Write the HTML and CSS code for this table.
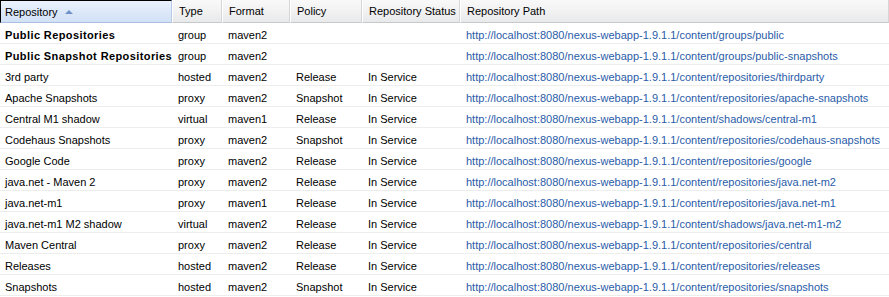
FILE: index.html
```html
<!DOCTYPE html>
<html>
<head>
<meta charset="utf-8">
<link rel="stylesheet" href="styles.css">
</head>
<body>
<table class="grid">
  <colgroup>
    <col class="c-repo"><col class="c-type"><col class="c-format"><col class="c-policy"><col class="c-status"><col class="c-path">
  </colgroup>
  <thead>
    <tr>
      <th class="sorted">Repository <span class="arrow"></span></th>
      <th>Type</th>
      <th>Format</th>
      <th>Policy</th>
      <th>Repository Status</th>
      <th>Repository Path</th>
    </tr>
  </thead>
  <tbody>
    <tr class="grp"><td>Public Repositories</td><td>group</td><td>maven2</td><td></td><td></td><td class="path">http://localhost:8080/nexus-webapp-1.9.1.1/content/groups/public</td></tr>
    <tr class="grp"><td>Public Snapshot Repositories</td><td>group</td><td>maven2</td><td></td><td></td><td class="path">http://localhost:8080/nexus-webapp-1.9.1.1/content/groups/public-snapshots</td></tr>
    <tr><td>3rd party</td><td>hosted</td><td>maven2</td><td>Release</td><td>In Service</td><td class="path">http://localhost:8080/nexus-webapp-1.9.1.1/content/repositories/thirdparty</td></tr>
    <tr><td>Apache Snapshots</td><td>proxy</td><td>maven2</td><td>Snapshot</td><td>In Service</td><td class="path">http://localhost:8080/nexus-webapp-1.9.1.1/content/repositories/apache-snapshots</td></tr>
    <tr><td>Central M1 shadow</td><td>virtual</td><td>maven1</td><td>Release</td><td>In Service</td><td class="path">http://localhost:8080/nexus-webapp-1.9.1.1/content/shadows/central-m1</td></tr>
    <tr><td>Codehaus Snapshots</td><td>proxy</td><td>maven2</td><td>Snapshot</td><td>In Service</td><td class="path">http://localhost:8080/nexus-webapp-1.9.1.1/content/repositories/codehaus-snapshots</td></tr>
    <tr><td>Google Code</td><td>proxy</td><td>maven2</td><td>Release</td><td>In Service</td><td class="path">http://localhost:8080/nexus-webapp-1.9.1.1/content/repositories/google</td></tr>
    <tr><td>java.net - Maven 2</td><td>proxy</td><td>maven2</td><td>Release</td><td>In Service</td><td class="path">http://localhost:8080/nexus-webapp-1.9.1.1/content/repositories/java.net-m2</td></tr>
    <tr><td>java.net-m1</td><td>proxy</td><td>maven1</td><td>Release</td><td>In Service</td><td class="path">http://localhost:8080/nexus-webapp-1.9.1.1/content/repositories/java.net-m1</td></tr>
    <tr><td>java.net-m1 M2 shadow</td><td>virtual</td><td>maven2</td><td>Release</td><td>In Service</td><td class="path">http://localhost:8080/nexus-webapp-1.9.1.1/content/shadows/java.net-m1-m2</td></tr>
    <tr><td>Maven Central</td><td>proxy</td><td>maven2</td><td>Release</td><td>In Service</td><td class="path">http://localhost:8080/nexus-webapp-1.9.1.1/content/repositories/central</td></tr>
    <tr><td>Releases</td><td>hosted</td><td>maven2</td><td>Release</td><td>In Service</td><td class="path">http://localhost:8080/nexus-webapp-1.9.1.1/content/repositories/releases</td></tr>
    <tr><td>Snapshots</td><td>hosted</td><td>maven2</td><td>Snapshot</td><td>In Service</td><td class="path">http://localhost:8080/nexus-webapp-1.9.1.1/content/repositories/snapshots</td></tr>
  </tbody>
</table>
</body>
</html>
```
FILE: styles.css
```css
html, body {
  margin: 0;
  padding: 0;
  background: #fff;
}
.grid {
  width: 889px;
  border-collapse: separate;
  border-spacing: 0;
  table-layout: fixed;
  font-family: "Liberation Sans", Arial, sans-serif;
  font-size: 11px;
  color: #000;
}
.c-repo { width: 172px; }
.c-type { width: 50px; }
.c-format { width: 68px; }
.c-policy { width: 72px; }
.c-status { width: 98px; }
.c-path { width: 429px; }

.grid th {
  height: 22px;
  padding: 0 0 0 6px;
  text-align: left;
  font-weight: normal;
  white-space: nowrap;
  overflow: hidden;
  background: linear-gradient(#f9f9f9, #f1f1f2 55%, #e8e9ea);
  border-bottom: 1px solid #c8c8c8;
  border-left: 1px solid #fff;
  border-right: 1px solid #d6d6d6;
  box-sizing: border-box;
}
.grid th.sorted {
  background: linear-gradient(#eaf2fd, #dce8f9 55%, #d2e1f6);
  border-top: 1px solid #000;
  border-left: 1px solid #000;
  border-right: 1px solid #b8cbe6;
  border-bottom: 1px solid #a9c0e0;
  padding-left: 4px;
  height: 23px;
}
.arrow {
  display: inline-block;
  width: 0;
  height: 0;
  margin-left: 4px;
  vertical-align: 2px;
  border-left: 4px solid transparent;
  border-right: 4px solid transparent;
  border-bottom: 4px solid #6f93c9;
}
.grid td {
  height: 17px;
  padding: 3px 0 0 6px;
  border-bottom: 1px solid #ededed;
  white-space: nowrap;
  overflow: hidden;
  vertical-align: middle;
}
.grid td:first-child {
  padding-left: 5px;
  overflow: visible;
}
.grid tr.grp td:first-child {
  font-weight: bold;
  letter-spacing: 0.4px;
}
.grid td.path {
  color: #2a5ca8;
}
```
